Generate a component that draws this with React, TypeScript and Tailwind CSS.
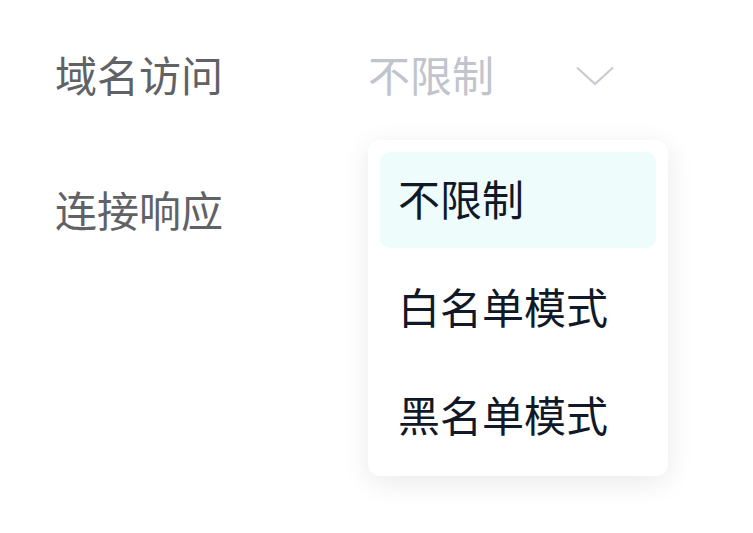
import { useState } from "react"

const options = ["不限制", "白名单模式", "黑名单模式"]

const Chevron = () => (
  <svg width="38" height="20" viewBox="0 0 38 20" fill="none">
    <path d="M1 1.5 L19 18 L37 1.5" stroke="#c8cbd2" strokeWidth="2.2" />
  </svg>
)

export default function App() {
  const [value] = useState("不限制")

  return (
    <div className="relative w-[753px] h-[533px] bg-white font-['Noto_Sans_CJK_SC',sans-serif] text-[42px] leading-[60px]">
      <div className="flex flex-col gap-[75px] pt-[44px] pl-[55px]">
        <div className="flex items-center">
          <div className="w-[313px] text-[#606266]">域名访问</div>
          <div className="relative flex w-[246px] items-center justify-between">
            <span className="text-[#c0c4cc]">{value}</span>
            <div className="pt-[4px]">
              <Chevron />
            </div>
            <div className="absolute left-0 top-[96px] z-10 flex w-[300px] flex-col gap-[12px] rounded-[12px] bg-white p-[12px] shadow-[0_6px_28px_rgba(0,0,0,0.09)]">
              {options.map((opt) => (
                <div
                  key={opt}
                  className={
                    "flex h-[96px] items-center rounded-[10px] pb-[4px] pl-[18px] text-[#111827] " +
                    (opt === value ? "bg-[#effcfc]" : "")
                  }
                >
                  {opt}
                </div>
              ))}
            </div>
          </div>
        </div>
        <div className="flex items-center">
          <div className="w-[313px] text-[#606266]">连接响应</div>
        </div>
      </div>
    </div>
  )
}
